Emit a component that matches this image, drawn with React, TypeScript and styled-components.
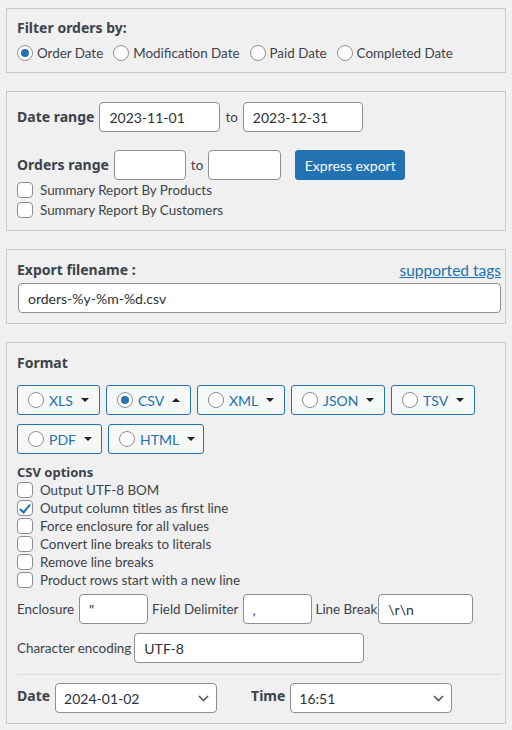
import React from "react"
import styled, { createGlobalStyle } from "styled-components"

const GlobalStyle = createGlobalStyle`
  html, body {
    margin: 0;
    padding: 0;
    background: #f0f0f1;
  }
  body {
    font-family: Lato, "Liberation Sans", sans-serif;
    font-size: 13.4px;
    color: #3c434a;
  }
  * { box-sizing: border-box; }
`

const Page = styled.div`
  display: flex;
  flex-direction: column;
  gap: 18px;
  padding: 8px 6px 6px 6px;
`

const Panel = styled.section<{ $pt?: number; $pb?: number }>`
  border: 1px solid #c8c9cc;
  background: #f0f0f0;
  padding: ${(p) => p.$pt ?? 10}px 4px ${(p) => p.$pb ?? 10}px 10px;
  display: flex;
  flex-direction: column;
`

const Title = styled.div`
  font-family: "Noto Sans", Lato, sans-serif;
  font-weight: 700;
  font-size: 14px;
  line-height: 20px;
  color: #3c434a;
`

const Row = styled.div<{ $gap?: number; $mt?: number }>`
  display: flex;
  align-items: center;
  gap: ${(p) => p.$gap ?? 0}px;
  margin-top: ${(p) => p.$mt ?? 0}px;
`

const SpaceRow = styled(Row)`
  justify-content: space-between;
`

const Label = styled.label`
  display: inline-flex;
  align-items: center;
  gap: 4px;
  line-height: 18px;
  white-space: nowrap;
`

const BoldLabel = styled.span`
  font-family: "Noto Sans", Lato, sans-serif;
  font-weight: 700;
  font-size: 14px;
  line-height: 20px;
  margin-right: 5px;
  white-space: nowrap;
`

const Small = styled.span<{ $ml?: number; $mr?: number }>`
  margin-left: ${(p) => p.$ml ?? 5}px;
  margin-right: ${(p) => p.$mr ?? 5}px;
  white-space: nowrap;
`

const Radio = styled.input.attrs({ type: "radio" })`
  appearance: none;
  margin: 0;
  width: 16px;
  height: 16px;
  border: 1px solid #8c8f94;
  border-radius: 50%;
  background: #fff;
  flex: none;
  display: grid;
  place-items: center;
  &:checked::before {
    content: "";
    width: 8px;
    height: 8px;
    border-radius: 50%;
    background: #2271b1;
  }
`

const Check = styled.input.attrs({ type: "checkbox" })`
  appearance: none;
  margin: 0;
  width: 16px;
  height: 16px;
  border: 1px solid #8c8f94;
  border-radius: 4px;
  background: #fff;
  flex: none;
  position: relative;
  &:checked::before {
    content: "";
    position: absolute;
    left: 4px;
    top: 1px;
    width: 4px;
    height: 9px;
    border: solid #2271b1;
    border-width: 0 2px 2px 0;
    transform: rotate(40deg);
  }
`

const CheckRow = styled.label<{ $h?: number }>`
  display: flex;
  align-items: center;
  gap: 7px;
  height: ${(p) => p.$h ?? 18}px;
  white-space: nowrap;
`

const Field = styled.input<{ $w: number }>`
  width: ${(p) => p.$w}px;
  height: 30px;
  border: 1px solid #8c8f94;
  border-radius: 4px;
  background: #fff;
  padding: 0 9px;
  font-family: inherit;
  font-size: 14px;
  color: #2c3338;
  flex: none;
  outline: none;
`

const WideField = styled(Field)`
  width: auto;
  margin: 3px 0 0 1px;
`

const PrimaryButton = styled.button`
  height: 30px;
  width: 110px;
  padding: 0;
  margin-left: 14px;
  border: 1px solid #2271b1;
  border-radius: 3px;
  background: #2271b1;
  color: #fff;
  font-family: inherit;
  font-size: 14px;
`

const Link = styled.a`
  color: #2271b1;
  text-decoration: underline;
  font-size: 15.5px;
`

const FormatGrid = styled.div`
  display: flex;
  flex-wrap: wrap;
  gap: 9px 6px;
  margin-top: 12px;
  max-width: 470px;
`

const FormatButton = styled.label<{ $w: number }>`
  width: ${(p) => p.$w}px;
  height: 30px;
  display: flex;
  align-items: center;
  padding-left: 10px;
  border: 1px solid #2271b1;
  border-radius: 3px;
  background: #f6f7f7;
  color: #2271b1;
  font-size: 14px;
`

const FormatName = styled.span`
  margin-left: 5px;
  margin-right: 8px;
`

const Caret = styled.span<{ $up?: boolean }>`
  width: 0;
  height: 0;
  border-left: 4px solid transparent;
  border-right: 4px solid transparent;
  ${(p) =>
    p.$up ? "border-bottom: 4px solid #1d2327;" : "border-top: 4px solid #1d2327;"}
`

const SubTitle = styled.div`
  font-family: "Noto Sans", Lato, sans-serif;
  font-weight: 700;
  font-size: 13px;
  line-height: 18px;
  margin-top: 9px;
`

const Divider = styled.hr`
  border: 0;
  border-top: 1px solid #dcdcde;
  margin: 11px 0 8px;
  width: 100%;
`

const SelectWrap = styled.div`
  position: relative;
  width: 162px;
  height: 30px;
`

const Select = styled.select`
  appearance: none;
  width: 100%;
  height: 30px;
  border: 1px solid #8c8f94;
  border-radius: 4px;
  background: #fff;
  padding: 0 24px 0 8px;
  font-family: inherit;
  font-size: 14px;
  color: #2c3338;
`

const Chevron = styled.svg`
  position: absolute;
  right: 8px;
  top: 12px;
  pointer-events: none;
`

const DateLabel = styled(BoldLabel)<{ $ml?: number }>`
  align-self: flex-start;
  margin-top: 3px;
  margin-left: ${(p) => p.$ml ?? 0}px;
`

const formats = [
  { name: "XLS", w: 83 },
  { name: "CSV", w: 85, checked: true },
  { name: "XML", w: 88 },
  { name: "JSON", w: 94 },
  { name: "TSV", w: 84 },
  { name: "PDF", w: 85 },
  { name: "HTML", w: 96 },
]

const csvOptions = [
  { text: "Output UTF-8 BOM" },
  { text: "Output column titles as first line", checked: true },
  { text: "Force enclosure for all values" },
  { text: "Convert line breaks to literals" },
  { text: "Remove line breaks" },
  { text: "Product rows start with a new line" },
]

function ChevronDown() {
  return (
    <Chevron width="11" height="7" viewBox="0 0 11 7">
      <path d="M1 1l4.5 4.5L10 1" fill="none" stroke="#50575e" strokeWidth="1.6" />
    </Chevron>
  )
}

export default function App() {
  return (
    <>
      <GlobalStyle />
      <Page>
        {/* filter by */}
        <Panel $pt={9} $pb={10}>
          <Title>Filter orders by:</Title>
          <Row $gap={10} $mt={6}>
            <Label><Radio name="by" defaultChecked />Order Date</Label>
            <Label><Radio name="by" />Modification Date</Label>
            <Label><Radio name="by" />Paid Date</Label>
            <Label><Radio name="by" />Completed Date</Label>
          </Row>
        </Panel>

        {/* ranges */}
        <Panel>
          <Row>
            <BoldLabel>Date range</BoldLabel>
            <Field $w={121} defaultValue="2023-11-01" />
            <Small>to</Small>
            <Field $w={120} defaultValue="2023-12-31" />
          </Row>
          <Row $mt={18}>
            <BoldLabel>Orders range</BoldLabel>
            <Field $w={72} />
            <Small>to</Small>
            <Field $w={73} />
            <PrimaryButton>Express export</PrimaryButton>
          </Row>
          <CheckRow $h={20}><Check />Summary Report By Products</CheckRow>
          <CheckRow $h={20}><Check />Summary Report By Customers</CheckRow>
        </Panel>

        {/* filename */}
        <Panel>
          <SpaceRow>
            <Title>Export filename :</Title>
            <Link href="#">supported tags</Link>
          </SpaceRow>
          <WideField $w={482} defaultValue="orders-%y-%m-%d.csv" />
        </Panel>

        {/* format */}
        <Panel>
          <Title>Format</Title>
          <FormatGrid>
            {formats.map((f) => (
              <FormatButton key={f.name} $w={f.w}>
                <Radio name="fmt" defaultChecked={f.checked} />
                <FormatName>{f.name}</FormatName>
                <Caret $up={f.checked} />
              </FormatButton>
            ))}
          </FormatGrid>
          <SubTitle>CSV options</SubTitle>
          {csvOptions.map((o) => (
            <CheckRow key={o.text}>
              <Check defaultChecked={o.checked} />
              {o.text}
            </CheckRow>
          ))}
          <Row $mt={5}>
            <Small $ml={0} $mr={5}>Enclosure</Small>
            <Field $w={69} defaultValue={'"'} />
            <Small $ml={4} $mr={4}>Field Delimiter</Small>
            <Field $w={69} defaultValue="," />
            <Small $ml={4} $mr={1}>Line Break</Small>
            <Field $w={95} defaultValue="\r\n" />
          </Row>
          <Row $mt={9}>
            <Small $ml={0} $mr={3}>Character encoding</Small>
            <Field $w={230} defaultValue="UTF-8" />
          </Row>
          <Divider />
          <Row>
            <DateLabel>Date</DateLabel>
            <SelectWrap>
              <Select defaultValue="2024-01-02">
                <option>2024-01-02</option>
              </Select>
              <ChevronDown />
            </SelectWrap>
            <DateLabel $ml={34}>Time</DateLabel>
            <SelectWrap>
              <Select defaultValue="16:51">
                <option>16:51</option>
              </Select>
              <ChevronDown />
            </SelectWrap>
          </Row>
        </Panel>
      </Page>
    </>
  )
}
